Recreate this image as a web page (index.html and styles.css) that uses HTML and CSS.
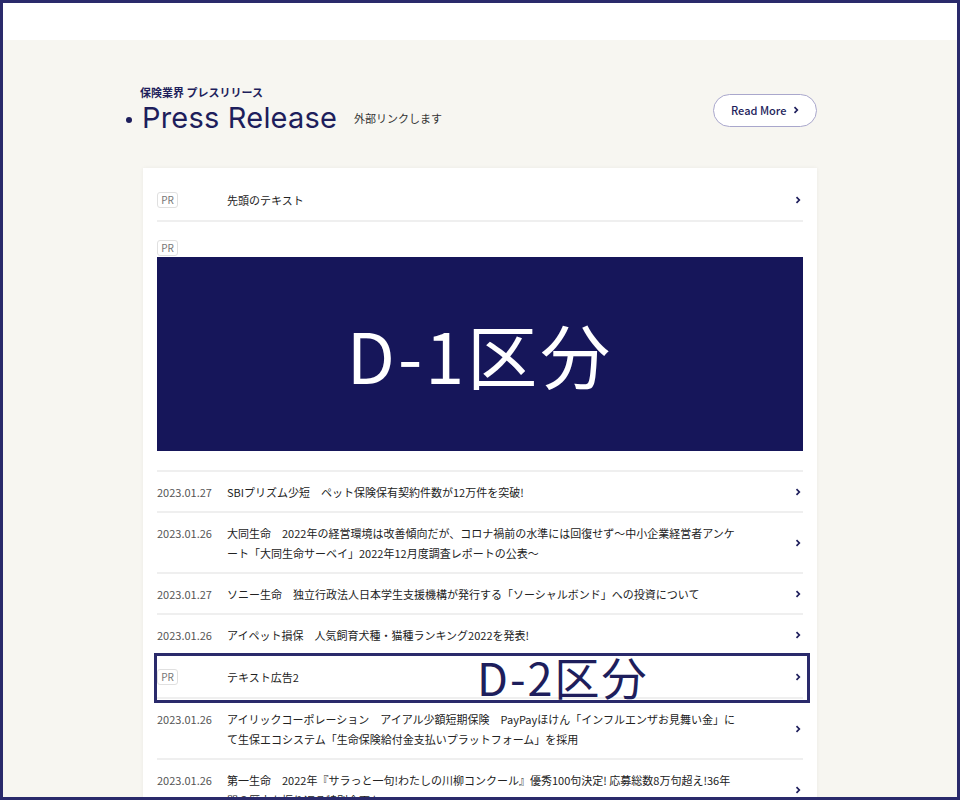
FILE: index.html
```html
<!DOCTYPE html>
<html lang="ja">
<head>
<meta charset="utf-8">
<title>Press Release</title>
<link rel="stylesheet" href="styles.css">
</head>
<body>
<div class="frame">
  <div class="topbar"></div>
  <main class="section">
    <div class="head">
      <div class="head-left">
        <p class="sub">保険業界 プレスリリース</p>
        <div class="title-row">
          <span class="dot"></span>
          <h2 class="title">Press Release</h2>
          <span class="ext">外部リンクします</span>
        </div>
      </div>
      <a class="more" href="#"><span>Read More</span>
        <svg class="chev" width="6" height="8" viewBox="0 0 6 8"><path d="M1.5 1.2 L4.3 4 L1.5 6.8" fill="none" stroke="#1e1e5c" stroke-width="1.7"/></svg>
      </a>
    </div>

    <div class="card">
      <a class="row first" href="#">
        <span class="col-date"><span class="pr">PR</span></span>
        <span class="col-title">先頭のテキスト</span>
        <svg class="chev" width="6" height="8" viewBox="0 0 6 8"><path d="M1.5 1.2 L4.3 4 L1.5 6.8" fill="none" stroke="#1e1e5c" stroke-width="1.7"/></svg>
      </a>

      <div class="row ad">
        <span class="pr">PR</span>
        <div class="banner">D-1区分</div>
      </div>

      <a class="row" href="#">
        <span class="col-date">2023.01.27</span>
        <span class="col-title">SBIプリズム少短　ペット保険保有契約件数が12万件を突破!</span>
        <svg class="chev" width="6" height="8" viewBox="0 0 6 8"><path d="M1.5 1.2 L4.3 4 L1.5 6.8" fill="none" stroke="#1e1e5c" stroke-width="1.7"/></svg>
      </a>
      <a class="row" href="#">
        <span class="col-date">2023.01.26</span>
        <span class="col-title">大同生命　2022年の経営環境は改善傾向だが、コロナ禍前の水準には回復せず〜中小企業経営者アンケート「大同生命サーベイ」2022年12月度調査レポートの公表〜</span>
        <svg class="chev" width="6" height="8" viewBox="0 0 6 8"><path d="M1.5 1.2 L4.3 4 L1.5 6.8" fill="none" stroke="#1e1e5c" stroke-width="1.7"/></svg>
      </a>
      <a class="row" href="#">
        <span class="col-date">2023.01.27</span>
        <span class="col-title">ソニー生命　独立行政法人日本学生支援機構が発行する「ソーシャルボンド」への投資について</span>
        <svg class="chev" width="6" height="8" viewBox="0 0 6 8"><path d="M1.5 1.2 L4.3 4 L1.5 6.8" fill="none" stroke="#1e1e5c" stroke-width="1.7"/></svg>
      </a>
      <a class="row" href="#">
        <span class="col-date">2023.01.26</span>
        <span class="col-title">アイペット損保　人気飼育犬種・猫種ランキング2022を発表!</span>
        <svg class="chev" width="6" height="8" viewBox="0 0 6 8"><path d="M1.5 1.2 L4.3 4 L1.5 6.8" fill="none" stroke="#1e1e5c" stroke-width="1.7"/></svg>
      </a>
      <a class="row text-ad" href="#">
        <span class="col-date"><span class="pr">PR</span></span>
        <span class="col-title">テキスト広告2</span>
        <svg class="chev" width="6" height="8" viewBox="0 0 6 8"><path d="M1.5 1.2 L4.3 4 L1.5 6.8" fill="none" stroke="#1e1e5c" stroke-width="1.7"/></svg>
        <span class="zone"><span class="zone-label">D-2区分</span></span>
      </a>
      <a class="row" href="#">
        <span class="col-date">2023.01.26</span>
        <span class="col-title">アイリックコーポレーション　アイアル少額短期保険　PayPayほけん「インフルエンザお見舞い金」にて生保エコシステム「生命保険給付金支払いプラットフォーム」を採用</span>
        <svg class="chev" width="6" height="8" viewBox="0 0 6 8"><path d="M1.5 1.2 L4.3 4 L1.5 6.8" fill="none" stroke="#1e1e5c" stroke-width="1.7"/></svg>
      </a>
      <a class="row" href="#">
        <span class="col-date">2023.01.26</span>
        <span class="col-title">第一生命　2022年『サラっと一句!わたしの川柳コンクール』優秀100句決定! 応募総数8万句超え!36年間の歴史を振り返る特別企画も</span>
        <svg class="chev" width="6" height="8" viewBox="0 0 6 8"><path d="M1.5 1.2 L4.3 4 L1.5 6.8" fill="none" stroke="#1e1e5c" stroke-width="1.7"/></svg>
      </a>
    </div>
  </main>
</div>
</body>
</html>
```

FILE: styles.css
```css
* { box-sizing: border-box; }
html, body { margin: 0; padding: 0; }
body {
  font-family: "Noto Sans CJK JP", "Noto Sans", sans-serif;
  color: #333;
  background: #f7f6f1;
}
.frame {
  width: 960px;
  height: 800px;
  border: 3px solid #2a2a6b;
  overflow: hidden;
  background: #f7f6f1;
}
.topbar {
  height: 37px;
  background: #ffffff;
}
.section {
  width: 674px;
  margin: 0 auto;
  padding-top: 44px;
}
.head {
  display: flex;
  justify-content: space-between;
  align-items: center;
}
.head-left { display: flex; flex-direction: column; }
.sub {
  margin: 0 0 0 -3px;
  font-size: 11px;
  line-height: 16px;
  font-weight: 700;
  color: #1e1e5c;
}
.title-row {
  display: flex;
  align-items: center;
  height: 36px;
}
.dot {
  width: 6px;
  height: 6px;
  border-radius: 50%;
  background: #1e1e5c;
  margin-left: -17px;
  margin-right: 11px;
  margin-top: 3px;
}
.title {
  margin: 0 0 0 -1px;
  font-family: Inter, "Noto Sans", sans-serif;
  font-weight: 400;
  font-size: 29px;
  line-height: 36px;
  color: #1e1e5c;
  letter-spacing: 0.2px;
}
.ext {
  margin-left: 17px;
  font-size: 11px;
  color: #333;
}
.more {
  display: flex;
  align-items: center;
  justify-content: space-between;
  width: 104px;
  height: 33px;
  padding: 0 17px 0 17px;
  border: 1px solid #a9a7cc;
  border-radius: 17px;
  background: #fff;
  color: #1e1e5c;
  font-size: 11px;
  font-weight: 500;
  text-decoration: none;
}
.card {
  margin-top: 32px;
  background: #fff;
  padding: 12px 14px 0;
  box-shadow: 0 0 4px rgba(0,0,0,0.05);
}
.row {
  position: relative;
  display: flex;
  align-items: flex-start;
  padding: 10px 0 9px;
  border-bottom: 2px solid #efefef;
  color: #222;
  text-decoration: none;
  font-size: 11px;
  line-height: 20px;
}
.row.first { padding-bottom: 10px; align-items: center; }
.col-date {
  flex: 0 0 70px;
  color: #555;
  display: flex;
  align-items: center;
  height: 20px;
}
.col-title {
  width: 510px;
  color: #222;
}
.row .chev {
  align-self: center;
  margin-left: auto;
  margin-right: 2px;
  flex: 0 0 auto;
}
.pr {
  display: inline-flex;
  align-items: center;
  justify-content: center;
  width: 21px;
  height: 16px;
  border: 1px solid #e0e0e0;
  border-radius: 3px;
  font-size: 10px;
  line-height: 1;
  color: #777;
  background: #fff;
}
.ad {
  flex-direction: column;
  align-items: flex-start;
  padding: 18px 0 19px;
}
.banner {
  margin-top: 1px;
  width: 100%;
  height: 194px;
  background: #16165a;
  color: #fff;
  display: flex;
  align-items: center;
  justify-content: center;
  font-family: "Noto Sans CJK JP", "Noto Sans", sans-serif;
  font-size: 70px;
  font-weight: 400;
  letter-spacing: 3px;
  line-height: 1;
}
.text-ad { padding: 11px 0 10px; }
.zone {
  position: absolute;
  top: -3px;
  bottom: -6px;
  left: -3px;
  right: -7px;
  border: 3px solid #2a2a6b;
  display: flex;
  align-items: center;
  pointer-events: none;
}
.zone-label {
  margin-left: 320px;
  margin-top: -3px;
  font-size: 45px;
  font-weight: 400;
  line-height: 1;
  color: #1e1e5c;
  letter-spacing: 2px;
}
```
